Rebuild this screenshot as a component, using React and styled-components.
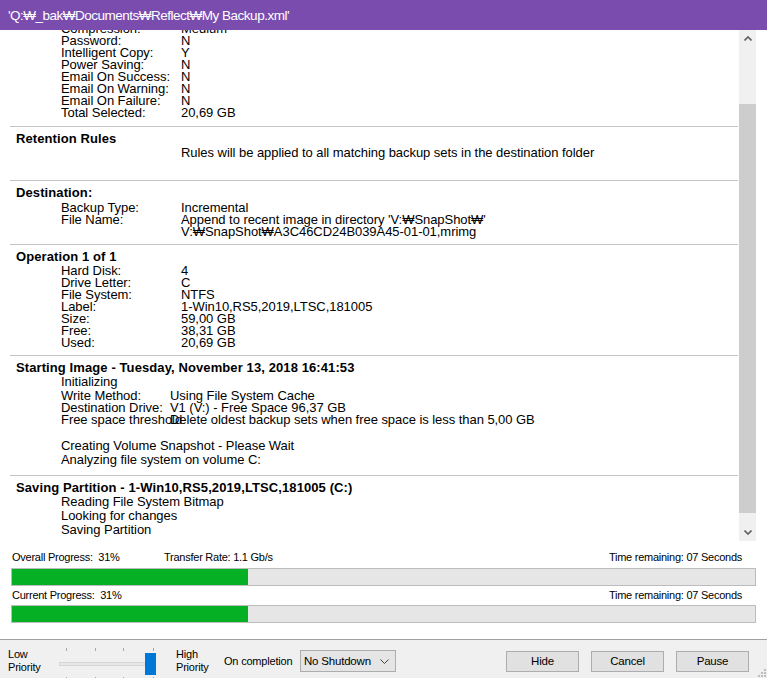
import React from "react";
import styled, { createGlobalStyle } from "styled-components";

const Global = createGlobalStyle`
  html, body { margin: 0; padding: 0; }
  body { width: 767px; height: 678px; overflow: hidden; background: #ffffff; }
  * { box-sizing: border-box; }
`;

const Window = styled.div`
  position: relative;
  width: 767px;
  height: 678px;
  display: flex;
  flex-direction: column;
  background: #ffffff;
  font-family: "Liberation Sans", Arial, sans-serif;
  color: #000;
`;

const TitleBar = styled.div`
  height: 30px;
  flex: none;
  background: #7a4cae;
  color: #ffffff;
  display: flex;
  align-items: center;
  padding-left: 8px;
  font-size: 13.5px;
  letter-spacing: -0.5px;
`;

const LogArea = styled.div`
  height: 511px;
  flex: none;
  display: flex;
  padding-right: 11px;
`;

const Viewport = styled.div`
  flex: 1;
  overflow: hidden;
  padding-left: 10px;
  padding-right: 1px;
`;

const Content = styled.div`
  margin-top: -7px;
  font-size: 13px;
  letter-spacing: -0.05px;
`;

const Section = styled.div`
  border-top: ${(p) => (p.$first ? "none" : "1px solid #c4c4c4")};
  padding: ${(p) => (p.$first ? "0" : "5px")} 0 ${(p) => p.$pb || 7}px;
`;

const Header = styled.div`
  font-weight: bold;
  line-height: 14px;
  height: 14px;
  padding-left: 6px;
  white-space: nowrap;
  letter-spacing: 0.1px;
  margin-bottom: ${(p) => p.$mb || 0}px;
`;

const Row = styled.div`
  display: grid;
  grid-template-columns: ${(p) => p.$col || 120}px 1fr;
  padding-left: 51px;
  line-height: 12px;
  height: 12px;
  white-space: nowrap;
`;

const Label = styled.span`
  overflow: visible;
`;

const Para = styled.div`
  padding-left: ${(p) => p.$indent || 51}px;
  line-height: 14px;
  height: 14px;
  white-space: nowrap;
`;

const Blank = styled.div`
  height: ${(p) => p.$h || 14}px;
`;

const ScrollBar = styled.div`
  width: 17px;
  flex: none;
  background: #f0f0f0;
  display: flex;
  flex-direction: column;
`;

const ScrollBtn = styled.div`
  height: 17px;
  display: flex;
  align-items: center;
  justify-content: center;
`;

const Track = styled.div`
  flex: 1;
  display: flex;
  flex-direction: column;
  padding-top: ${(p) => p.$top}px;
  padding-bottom: ${(p) => p.$bottom}px;
`;

const Thumb = styled.div`
  flex: 1;
  background: #cdcdcd;
`;

const ProgressArea = styled.div`
  height: 99px;
  flex: none;
  padding: 8px 11px 0 11px;
  border-bottom: 1px solid #a0a0a0;
  font-size: 11px;
  letter-spacing: -0.25px;
  color: #000;
`;

const ProgLabels = styled.div`
  display: flex;
  align-items: center;
  height: 16px;
  padding: 0 14px 0 1px;
  margin-bottom: ${(p) => p.$mb || 3}px;
`;

const ProgText = styled.span`
  white-space: pre;
  width: ${(p) => (p.$w ? p.$w + "px" : "auto")};
`;

const Spacer = styled.div`
  flex: 1;
`;

const Bar = styled.div`
  height: 18px;
  border: 1px solid #bcbcbc;
  background: #e6e6e6;
  margin-bottom: ${(p) => p.$mb || 0}px;
`;

const Fill = styled.div`
  height: 100%;
  background: #06b025;
`;

const BottomBar = styled.div`
  flex: 1;
  background: #f0f0f0;
  display: flex;
  align-items: center;
  padding: 4px 0 0 8px;
  font-size: 11px;
  letter-spacing: -0.2px;
`;

const TwoLine = styled.div`
  line-height: 13px;
  width: ${(p) => p.$w}px;
  margin-left: ${(p) => p.$ml || 0}px;
  flex: none;
`;

const Slider = styled.div`
  position: relative;
  width: 110px;
  height: 34px;
  flex: none;
  margin-left: 2px;
`;

const SliderTrack = styled.div`
  position: absolute;
  left: 7px;
  right: 13px;
  top: 18px;
  height: 4px;
  background: #e7e7e7;
  border: 1px solid #d6d6d6;
`;

const SliderThumb = styled.div`
  position: absolute;
  left: 93px;
  top: 9px;
  width: 11px;
  height: 22px;
  background: #0078d7;
`;

const Tick = styled.div`
  position: absolute;
  left: ${(p) => p.$x}px;
  top: ${(p) => p.$y}px;
  width: 1px;
  height: 3px;
  background: #a8a8a8;
`;

const CompletionLabel = styled.span`
  width: 76px;
  flex: none;
`;

const Select = styled.div`
  width: 96px;
  height: 22px;
  border: 1px solid #adadad;
  background: #e5e5e5;
  display: flex;
  align-items: center;
  justify-content: space-between;
  padding: 0 6px 0 3px;
  flex: none;
  font-size: 11.5px;
`;

const Buttons = styled.div`
  margin-left: auto;
  margin-right: 18px;
  display: flex;
  gap: 12px;
`;

const Button = styled.div`
  width: 73px;
  height: 21px;
  border: 1px solid #adadad;
  background: #e1e1e1;
  display: flex;
  align-items: center;
  justify-content: center;
  font-size: 11.5px;
`;

const Grip = styled.svg`
  position: absolute;
  right: 1px;
  bottom: 1px;
`;

const Chevron = ({ up }) => (
  <svg width="8" height="5" viewBox="0 0 8 5">
    <path
      d={up ? "M0.5 4.5 L4 1 L7.5 4.5" : "M0.5 0.5 L4 4 L7.5 0.5"}
      fill="none"
      stroke="#606060"
      strokeWidth="1.6"
    />
  </svg>
);

const settings = [
  ["Compression:", "Medium"],
  ["Password:", "N"],
  ["Intelligent Copy:", "Y"],
  ["Power Saving:", "N"],
  ["Email On Success:", "N"],
  ["Email On Warning:", "N"],
  ["Email On Failure:", "N"],
  ["Total Selected:", "20,69 GB"],
];

const operation = [
  ["Hard Disk:", "4"],
  ["Drive Letter:", "C"],
  ["File System:", "NTFS"],
  ["Label:", "1-Win10,RS5,2019,LTSC,181005"],
  ["Size:", "59,00 GB"],
  ["Free:", "38,31 GB"],
  ["Used:", "20,69 GB"],
];

const Rows = ({ items, col }) =>
  items.map(([l, v], i) => (
    <Row key={i} $col={col}>
      <Label>{l}</Label>
      <span>{v}</span>
    </Row>
  ));

const ticks = [14, 43, 71, 101];

export default function App() {
  const pct = 31.7;
  return (
    <Window>
      <Global />
      <TitleBar>'Q:₩_bak₩Documents₩Reflect₩My Backup.xml'</TitleBar>
      <LogArea>
        <Viewport>
          <Content>
            <Section $first>
              <Rows items={settings} />
            </Section>
            <Section>
              <Header>Retention Rules</Header>
              <Para $indent={171}>Rules will be applied to all matching backup sets in the destination folder</Para>
              <Blank $h={13} />
            </Section>
            <Section $pb={6}>
              <Header $mb={2}>Destination:</Header>
              <Rows
                items={[
                  ["Backup Type:", "Incremental"],
                  ["File Name:", "Append to recent image in directory 'V:₩SnapShot₩'"],
                  ["", "V:₩SnapShot₩A3C46CD24B039A45-01-01,mrimg"],
                ]}
              />
            </Section>
            <Section $pb={6}>
              <Header $mb={1}>Operation 1 of 1</Header>
              <Rows items={operation} />
            </Section>
            <Section $pb={8}>
              <Header>Starting Image - Tuesday, November 13, 2018 16:41:53</Header>
              <Para>Initializing</Para>
              <Blank $h={1} />
              <Rows
                col={109}
                items={[
                  ["Write Method:", "Using File System Cache"],
                  ["Destination Drive:", "V1 (V:) - Free Space 96,37 GB"],
                  ["Free space threshold", "Delete oldest backup sets when free space is less than 5,00 GB"],
                ]}
              />
              <Blank $h={13} />
              <Para>Creating Volume Snapshot - Please Wait</Para>
              <Para>Analyzing file system on volume C:</Para>
            </Section>
            <Section>
              <Header>Saving Partition - 1-Win10,RS5,2019,LTSC,181005 (C:)</Header>
              <Para>Reading File System Bitmap</Para>
              <Para>Looking for changes</Para>
              <Para>Saving Partition</Para>
            </Section>
          </Content>
        </Viewport>
        <ScrollBar>
          <ScrollBtn>
            <Chevron up />
          </ScrollBtn>
          <Track $top={57} $bottom={11}>
            <Thumb />
          </Track>
          <ScrollBtn>
            <Chevron />
          </ScrollBtn>
        </ScrollBar>
      </LogArea>
      <ProgressArea>
        <ProgLabels>
          <ProgText $w={152}>Overall Progress:  31%</ProgText>
          <ProgText>Transfer Rate: 1.1 Gb/s</ProgText>
          <Spacer />
          <ProgText>Time remaining: 07 Seconds</ProgText>
        </ProgLabels>
        <Bar $mb={1}>
          <Fill style={{ width: pct + "%" }} />
        </Bar>
        <ProgLabels $mb={2}>
          <ProgText>Current Progress:  31%</ProgText>
          <Spacer />
          <ProgText>Time remaining: 07 Seconds</ProgText>
        </ProgLabels>
        <Bar>
          <Fill style={{ width: pct + "%" }} />
        </Bar>
      </ProgressArea>
      <BottomBar>
        <TwoLine $w={42}>
          Low
          <br />
          Priority
        </TwoLine>
        <Slider>
          {ticks.map((x) => (
            <Tick key={"t" + x} $x={x} $y={4} />
          ))}
          {ticks.map((x) => (
            <Tick key={"b" + x} $x={x} $y={33} />
          ))}
          <SliderTrack />
          <SliderThumb />
        </Slider>
        <TwoLine $w={48} $ml={14}>
          High
          <br />
          Priority
        </TwoLine>
        <CompletionLabel>On completion</CompletionLabel>
        <Select>
          <span>No Shutdown</span>
          <svg width="9" height="5" viewBox="0 0 9 5">
            <path d="M0.5 0.5 L4.5 4.5 L8.5 0.5" fill="none" stroke="#404040" strokeWidth="1" />
          </svg>
        </Select>
        <Buttons>
          <Button>Hide</Button>
          <Button>Cancel</Button>
          <Button>Pause</Button>
        </Buttons>
      </BottomBar>
      <Grip width="8" height="8" viewBox="0 0 8 8">
        {[
          [6, 0],
          [6, 3],
          [3, 3],
          [6, 6],
          [3, 6],
          [0, 6],
        ].map(([x, y], i) => (
          <rect key={i} x={x} y={y} width="2" height="2" fill="#bdbdbd" />
        ))}
      </Grip>
    </Window>
  );
}
